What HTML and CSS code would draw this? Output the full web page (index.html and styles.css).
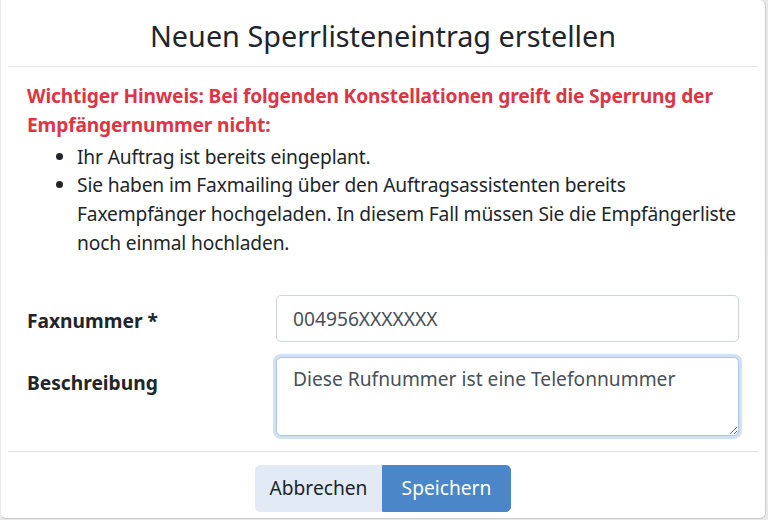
FILE: index.html
```html
<!DOCTYPE html>
<html>
<head>
  <title>Neuen Sperrlisteneintrag erstellen</title>
  <link rel="stylesheet" href="styles.css">
</head>
<body>
  <div class="modal">
    <div class="modal-header">
      <h4 class="modal-title">Neuen Sperrlisteneintrag erstellen</h4>
    </div>
    <div class="modal-body">
      <p class="notice">Wichtiger Hinweis: Bei folgenden Konstellationen greift die Sperrung der Empfängernummer nicht:</p>
      <ul class="notice-list">
        <li>Ihr Auftrag ist bereits eingeplant.</li>
        <li>Sie haben im Faxmailing über den Auftragsassistenten bereits Faxempfänger hochgeladen. In diesem Fall müssen Sie die Empfängerliste noch einmal hochladen.</li>
      </ul>
      <form class="entry-form">
        <label for="faxnummer">Faxnummer *</label>
        <input type="text" id="faxnummer" class="form-control" value="004956XXXXXXX">
        <label for="beschreibung">Beschreibung</label>
        <textarea id="beschreibung" class="form-control" rows="2">Diese Rufnummer ist eine Telefonnummer</textarea>
      </form>
    </div>
    <div class="modal-footer">
      <div class="btn-group">
        <button type="button" class="btn btn-light">Abbrechen</button>
        <button type="button" class="btn btn-primary">Speichern</button>
      </div>
    </div>
  </div>
  <script src="script.js"></script>
</body>
</html>
```

FILE: styles.css
```css
html, body {
  margin: 0;
  padding: 0;
  background-color: #e9e9e9;
}
body {
  font-family: "Noto Sans", "Open Sans", sans-serif;
  font-size: 19.2px;
  line-height: 1.5;
  color: #212529;
}
.modal {
  box-sizing: border-box;
  width: 766px;
  height: 519px;
  background-color: #fff;
  border: 1px solid rgba(0, 0, 0, 0.2);
  border-top: none;
  border-left-color: rgba(0, 0, 0, 0.08);
  border-radius: 0 6px 6px 6px;
  display: flex;
  flex-direction: column;
}
.modal-header {
  margin: 0 7px;
  height: 66px;
  border-bottom: 1px solid #dee2e6;
  display: flex;
  align-items: center;
  justify-content: center;
}
.modal-title {
  margin: 0;
  font-size: 28.8px;
  font-weight: 400;
  line-height: 1.2;
  padding-top: 6px;
}
.modal-body {
  flex: 1;
  padding: 15px 26px 0 26px;
  letter-spacing: -0.15px;
}
.notice {
  margin: 0;
  color: #dc3545;
  font-weight: bold;
}
.notice-list {
  margin: 3px 0 37px 0;
  padding-left: 50px;
}
.entry-form {
  display: grid;
  grid-template-columns: 249px 1fr;
  row-gap: 15px;
  align-items: start;
  letter-spacing: 0;
}
.entry-form label {
  font-weight: bold;
  padding-top: 12px;
}
.form-control {
  box-sizing: border-box;
  width: 100%;
  margin: 0;
  font-family: inherit;
  font-size: 19.2px;
  line-height: 1.5;
  color: #495057;
  background-color: #fff;
  border: 1px solid #ced4da;
  border-radius: 5px;
  padding: 7px 16px;
}
input.form-control {
  height: 47px;
}
textarea.form-control {
  height: 79px;
  resize: vertical;
}
textarea.form-control:focus {
  border-color: #a9c6e6;
  box-shadow: 0 0 0 3px rgba(74, 134, 200, 0.25);
  outline: none;
}
.modal-footer {
  margin: 0 7px;
  height: 67px;
  border-top: 1px solid #dee2e6;
  display: flex;
  align-items: center;
  justify-content: center;
  padding-top: 6px;
  box-sizing: border-box;
}
.btn-group {
  display: flex;
}
.btn {
  font-family: inherit;
  font-size: 19.2px;
  line-height: 1.5;
  height: 47px;
  padding: 7px 0;
  text-align: center;
  border: 1px solid transparent;
  cursor: pointer;
}
.btn-light {
  width: 127px;
  background-color: #e1eaf5;
  border-color: #e1eaf5;
  color: #212529;
  border-radius: 5px 0 0 5px;
}
.btn-primary {
  width: 129px;
  background-color: #4a86c8;
  border-color: #4a86c8;
  color: #fff;
  border-radius: 0 5px 5px 0;
}
```

FILE: script.js
```js
const field = document.getElementById('beschreibung');
field.focus();
field.setSelectionRange(field.value.length, field.value.length);
```
